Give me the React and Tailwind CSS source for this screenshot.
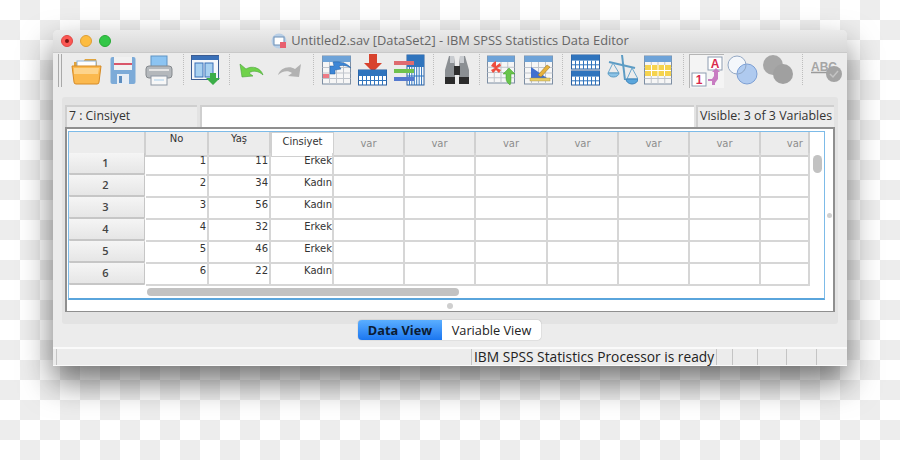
const rows = [
  [1, 11, "Erkek"],
  [2, 34, "Kadın"],
  [3, 56, "Kadın"],
  [4, 32, "Erkek"],
  [5, 46, "Erkek"],
  [6, 22, "Kadın"],
];

const varCols = [0, 1, 2, 3, 4, 5, 6];
const gridCols = "grid grid-cols-[77px_63px_62px_63px_71px_71px_72px_71px_71px_71px_49px]";

// small spreadsheet drawing used by most toolbar icons
function Sheet({ x = 0, y = 0, w = 29, h = 29, fill = "#f6f6f6" }) {
  const cols = [1, 2, 3].map((i) => x + (w * i) / 4);
  const lines = [1, 2, 3].map((i) => y + 6 + ((h - 6) * i) / 4);
  return (
    <g>
      <rect x={x} y={y} width={w} height={h} fill={fill} stroke="#7d8ea3" />
      <rect x={x} y={y} width={w} height="6" fill="#6ea3d8" />
      {cols.map((c) => (
        <line key={c} x1={c} x2={c} y1={y + 6} y2={y + h} stroke="#c0c5cc" />
      ))}
      {lines.map((l) => (
        <line key={l} x1={x} x2={x + w} y1={l} y2={l} stroke="#c0c5cc" />
      ))}
    </g>
  );
}

function BlueTable({ x = 0, y = 0, w = 29, h = 14 }) {
  const cols = [1, 2, 3, 4, 5, 6].map((i) => x + (w * i) / 7);
  return (
    <g>
      <rect x={x} y={y} width={w} height={h} fill="#fff" stroke="#2a5f9e" />
      <rect x={x} y={y} width={w} height={h * 0.4} fill="#2f74bd" />
      {cols.map((c) => (
        <line key={c} x1={c} x2={c} y1={y + h * 0.4} y2={y + h} stroke="#2f74bd" />
      ))}
      <line x1={x} x2={x + w} y1={y + h * 0.7} y2={y + h * 0.7} stroke="#2f74bd" />
    </g>
  );
}

function Icon({ w = 30, className = "", children }) {
  return (
    <svg width={w} height="32" viewBox={`0 0 ${w} 32`} className={`shrink-0 ${className}`}>
      {children}
    </svg>
  );
}

function Sep({ className = "" }) {
  return <div className={`h-[31px] w-0 border-l border-dotted border-[#bdbdbd] shrink-0 ${className}`} />;
}

function Toolbar() {
  return (
    <div className="h-[45px] pt-px flex items-start border-t border-[#c9c9c9] bg-[#ececec]">
      <div className="ml-[5px] h-[33px] w-[4px] border-x border-[#a9a9a9] shrink-0" />

      {/* open */}
      <Icon w={31} className="ml-[9px]">
        <path d="M3 8h9l2-3h11l1 4v3H3z" fill="#e0a43e" />
        <rect x="6" y="7" width="19" height="7" fill="#fff" stroke="#8fb4d8" />
        <path d="M1 12h29l-2 16a2 2 0 0 1-2 2H5a2 2 0 0 1-2-2z" fill="#fbb94e" stroke="#d68a24" />
        <path d="M3 14h25l-1 6H3z" fill="#fdd48c" />
      </Icon>
      {/* save */}
      <Icon w={26} className="ml-[8px]">
        <rect x="0.5" y="3" width="25" height="27" rx="2" fill="#7dabd8" />
        <rect x="4" y="3" width="18" height="13" fill="#f1f1f1" />
        <rect x="4" y="9" width="18" height="2" fill="#d9566a" />
        <rect x="7" y="20" width="12" height="10" fill="#e6edf5" />
        <rect x="9" y="22" width="3" height="7" fill="#5d8dbf" />
      </Icon>
      {/* print */}
      <Icon w={28} className="ml-[9px]">
        <rect x="6" y="2" width="16" height="12" fill="#8cc4f2" stroke="#5e93c4" />
        <rect x="1" y="12" width="26" height="12" rx="3" fill="#b4b8bc" stroke="#85898d" />
        <rect x="4" y="15" width="20" height="2" fill="#e4e4e4" />
        <rect x="6" y="22" width="16" height="9" fill="#f7f7f7" stroke="#8d98a5" />
        <line x1="9" x2="19" y1="26" y2="26" stroke="#a9d0ee" />
      </Icon>
      <Sep className="ml-[10px]" />
      {/* data window */}
      <Icon w={30} className="ml-[7px]">
        <rect x="0.5" y="1.5" width="27" height="24" fill="#f5f7fa" stroke="#3b5c92" />
        <rect x="1" y="2" width="27" height="4" fill="#3a70b8" />
        <rect x="4" y="9" width="8" height="14" fill="#a8d0f0" stroke="#3a70b8" />
        <rect x="14" y="9" width="8" height="14" fill="#a8d0f0" stroke="#3a70b8" />
        <path d="M19 19h6v5h4l-7 7-7-7h4z" fill="#3cae48" />
      </Icon>
      <Sep className="ml-[8px]" />
      {/* undo */}
      <Icon w={26} className="ml-[9px]">
        <path d="M1 10l2 13 11-1-4-3c4-3 10-2 14 2-2-7-11-10-17-6z" fill="#6fd24a" stroke="#4aa33b" strokeWidth="0.6" />
      </Icon>
      {/* redo */}
      <Icon w={26} className="ml-[11px]">
        <path d="M25 10l-2 13-11-1 4-3c-4-3-10-2-14 2 2-7 11-10 17-6z" fill="#b2b2b2" />
      </Icon>
      <Sep className="ml-[11px]" />
      {/* go to case */}
      <Icon w={30} className="ml-[8px]">
        <Sheet x={0.5} y={2} w={28} h={28} />
        <rect x="1" y="20" width="6" height="4" fill="#ee7a85" />
        <path d="M8 20v-8h4l-1-4c7-1 14 1 18 6-5-3-9-3-12-2l2 3-6 1v4z" fill="#3d86d6" stroke="#255f9f" strokeWidth="0.5" />
      </Icon>
      {/* insert cases */}
      <Icon w={30} className="ml-[6px]">
        <path d="M11 0h8v9h5l-9 9-9-9h5z" fill="#d8432e" />
        <BlueTable x={0.5} y={16} w={28} h={15} />
      </Icon>
      {/* insert variable */}
      <Icon w={32} className="ml-[5px]">
        <BlueTable x={14} y={1} w={17} h={30} />
        <rect x="1" y="7" width="20" height="4" fill="#df6b6f" />
        <rect x="1" y="15" width="20" height="4" fill="#6fc24f" />
        <rect x="1" y="23" width="20" height="4" fill="#5479cf" />
      </Icon>
      <Sep className="ml-[8px]" />
      {/* find */}
      <Icon w={26} className="ml-[10px]">
        <path d="M5 2h5l1 10v18H1V16z" fill="#8b8f93" />
        <path d="M21 2h-5l-1 10v18h10V16z" fill="#8b8f93" />
        <rect x="10" y="12" width="6" height="9" fill="#2d2d2d" />
        <rect x="1" y="23" width="10" height="7" fill="#2b2b2b" />
        <rect x="15" y="23" width="10" height="7" fill="#2b2b2b" />
        <rect x="6" y="2" width="4" height="7" fill="#c9ccd0" />
        <rect x="16" y="2" width="4" height="7" fill="#c9ccd0" />
      </Icon>
      <Sep className="ml-[9px]" />
      {/* split file */}
      <Icon w={30} className="ml-[7px]">
        <Sheet x={0.5} y={2} w={27} h={27} />
        <path d="M9 7v5l4-3 1 3-4 2 4 2-2 3-3-3-3 3-2-3 4-2-4-2 2-3z" fill="#ee4d3e" />
        <path d="M22 14l6 6h-4v4c0 3 0 5-1 7-2-2-4-3-4-7v-4h-3z" fill="#69c44a" stroke="#3f9c31" strokeWidth="0.5" />
      </Icon>
      {/* weight cases */}
      <Icon w={30} className="ml-[7px]">
        <Sheet x={0.5} y={2} w={28} h={28} />
        <path d="M7 13v11h16z" fill="#3f70cf" />
        <path d="M14 21l9-10 3 2-9 10z" fill="#e7b23b" stroke="#8c6a1c" strokeWidth="0.5" />
        <rect x="6" y="24" width="20" height="3" fill="#e7cd6a" stroke="#a38b37" strokeWidth="0.4" />
      </Icon>
      <Sep className="ml-[8px]" />
      {/* split tables */}
      <Icon w={30} className="ml-[8px]">
        <BlueTable x={0.5} y={1} w={28} h={14} />
        <BlueTable x={0.5} y={17} w={28} h={14} />
      </Icon>
      {/* scale */}
      <Icon w={31} className="ml-[6px]">
        <line x1="15" x2="18" y1="1" y2="26" stroke="#5d9cc4" strokeWidth="2" />
        <path d="M2 8l26 6" stroke="#5d9cc4" strokeWidth="2" />
        <path d="M6 9l-5 10h11z" fill="none" stroke="#6ba6cc" />
        <path d="M25 14l-5 11h11z" fill="none" stroke="#6ba6cc" />
        <path d="M1 19h11a5.500 4 0 0 1-11 0z" fill="#8cc3e6" stroke="#5d9cc4" />
        <path d="M19 25h12a6 5 0 0 1-12 0z" fill="#5aa6dc" stroke="#3c82b8" />
      </Icon>
      {/* value labels table */}
      <Icon w={29} className="ml-[6px]">
        <Sheet x={0.5} y={2} w={27} h={28} />
        <rect x="1" y="11" width="26" height="11" fill="#f5d34f" />
        <line x1="1" x2="27" y1="16.500" y2="16.500" stroke="#fff" />
        <line x1="7.500" x2="7.500" y1="11" y2="22" stroke="#fff" />
        <line x1="14" x2="14" y1="11" y2="22" stroke="#fff" />
        <line x1="20.500" x2="20.500" y1="11" y2="22" stroke="#fff" />
      </Icon>
      <Sep className="ml-[10px]" />
      {/* value labels toggle, pressed */}
      <div className="ml-[5px] h-[34px] w-[35px] border-l border-t border-[#b5b5b5] bg-[#f4f4f4] shrink-0">
        <svg width="34" height="33" viewBox="0 0 34 33">
          <rect x="18" y="2" width="14" height="13" fill="#fff" stroke="#8d9cb0" />
          <text x="25" y="13" textAnchor="middle" fontSize="12" fontWeight="700" fill="#d92a4e" fontFamily="Liberation Sans, sans-serif">A</text>
          <rect x="2" y="18" width="14" height="13" fill="#fff" stroke="#8d9cb0" />
          <text x="9" y="29" textAnchor="middle" fontSize="12" fontWeight="700" fill="#d92a4e" fontFamily="Liberation Sans, sans-serif">1</text>
          <path d="M18 24h4l2-3v-4h-2l4-4 4 4h-2v7l-3 4v2h-3v-4h-4z" fill="#c87cc2" />
        </svg>
      </div>
      {/* variable sets */}
      <Icon w={31} className="ml-[3px]">
        <circle cx="10" cy="11" r="9" fill="#f4f7fb" stroke="#93a8c4" />
        <circle cx="20" cy="20" r="10" fill="#a8c6f0" fillOpacity="0.9" stroke="#7c9fd4" />
        <path d="M11 20a9 9 0 0 0 8-9" fill="none" stroke="#93a8c4" />
      </Icon>
      {/* variable sets, disabled */}
      <Icon w={31} className="ml-[5px]">
        <circle cx="10" cy="11" r="10" fill="#a6a6a6" />
        <circle cx="20" cy="20" r="10" fill="#a0a0a0" />
      </Icon>
      <Sep className="ml-[8px]" />
      {/* spell check, disabled */}
      <Icon w={32} className="ml-[8px]">
        <text x="0" y="17" fontSize="12" fontWeight="700" fill="#a5a5a5" fontFamily="Liberation Sans, sans-serif">ABC</text>
        <line x1="0" x2="24" y1="18.500" y2="18.500" stroke="#9a9a9a" strokeWidth="1.500" />
        <circle cx="23" cy="20" r="8" fill="#a3a3a3" />
        <path d="M19 20l3 3 5-6" fill="none" stroke="#c4c4c4" strokeWidth="1.500" />
      </Icon>
    </div>
  );
}

function DataGrid() {
  return (
    <div className="flex-1 border-2 border-b border-[#8f8f8f] bg-white flex flex-col">
      <div className="mt-[2px] flex">
        <div className="ml-px h-[169px] w-[757px] shrink-0 border border-[#7dbbe8] border-b-2 border-b-[#5aa5dc] bg-white flex">
          <div className="w-[741px] shrink-0 flex flex-col">
            {/* header row */}
            <div className={`${gridCols} h-[21px] text-[10px] text-[#333]`}>
              <div className="bg-[#ececec] border-r-2 border-b-2 border-[#d0d0d0]" />
              <div className="bg-[#ececec] border-r-2 border-b-2 border-[#d0d0d0] text-center leading-[14px]">No</div>
              <div className="bg-[#ececec] border-r-2 border-b-2 border-[#d0d0d0] text-center leading-[14px]">Yaş</div>
              <div className="bg-white border border-[#d0d0d0] text-center leading-[17px]">Cinsiyet</div>
              {varCols.map((i) => (
                <div
                  key={i}
                  className={`bg-[#ececec] border-r-2 border-b-2 border-[#d0d0d0] leading-[23px] text-[#8d8d8d] ${i === 6 ? "text-right pr-[5px]" : "text-center"}`}
                >
                  var
                </div>
              ))}
            </div>
            {/* data rows */}
            {rows.map((r) => (
              <div key={r[0]} className={`${gridCols} h-[22px] text-[10px] text-[#333]`}>
                <div className="mb-px mr-px pr-[2px] rounded-[1px] border-b-2 border-r border-[#c6c6c6] bg-gradient-to-b from-[#f5f5f5] to-[#e6e6e6] text-center font-['Open_Sans',sans-serif] text-[11px] font-semibold leading-[20px] text-[#444]">
                  {r[0]}
                </div>
                <div className="border-r-2 border-b-2 border-[#d6d6d6] text-right pr-px leading-[16px]">{r[0]}</div>
                <div className="border-r-2 border-b-2 border-[#d6d6d6] text-right pr-px leading-[16px]">{r[1]}</div>
                <div className="border-r-2 border-b-2 border-[#d6d6d6] text-right leading-[16px]">{r[2]}</div>
                {varCols.map((i) => (
                  <div key={i} className="border-r-2 border-b-2 border-[#d6d6d6]" />
                ))}
              </div>
            ))}
            {/* horizontal scroller */}
            <div className="flex-1 pl-[78px] pt-[3px]">
              <div className="h-[8px] w-[312px] rounded-full bg-[#c2c2c2]" />
            </div>
          </div>
          {/* vertical scroller */}
          <div className="flex-1 pl-[3px] pt-[23px]">
            <div className="h-[18px] w-[9px] rounded-full bg-[#c2c2c2]" />
          </div>
        </div>
        <div className="flex-1 flex items-center justify-center">
          <div className="w-[5px] h-[5px] rounded-full bg-[#cfcfcf]" />
        </div>
      </div>
      {/* split handle */}
      <div className="flex-1 flex items-center justify-center">
        <div className="w-[6px] h-[6px] rounded-full bg-[#cfcfcf]" />
      </div>
    </div>
  );
}

export default function App() {
  return (
    <div className="w-[900px] h-[460px] overflow-hidden pt-[30px] pl-[53px] bg-[conic-gradient(#ededed_25%,#ffffff_25%_50%,#ededed_50%_75%,#ffffff_75%)] bg-[length:40px_40px] font-['DejaVu_Sans',sans-serif]">
      <div className="w-[794px] h-[336px] flex flex-col rounded-t-[5px] bg-[#ececec] shadow-[0_16px_32px_rgba(0,0,0,0.55)]">
        {/* title bar */}
        <div className="h-[22px] relative flex items-center justify-center rounded-t-[5px] bg-gradient-to-b from-[#ebebeb] to-[#d6d6d6]">
          <div className="absolute left-[8px] top-[5px] flex gap-[7px]">
            <div className="w-[12px] h-[12px] rounded-full bg-[#fc5753] border border-[#df4744] flex items-center justify-center">
              <div className="w-[4px] h-[4px] rounded-full bg-[#7a1512]" />
            </div>
            <div className="w-[12px] h-[12px] rounded-full bg-[#fdbc40] border border-[#de9f34]" />
            <div className="w-[12px] h-[12px] rounded-full bg-[#33c748] border border-[#27aa35]" />
          </div>
          <svg width="16" height="16" viewBox="0 0 16 16" className="mr-[4px]">
            <circle cx="8" cy="8" r="7.500" fill="#b9cfe6" />
            <rect x="3" y="4" width="10" height="8" fill="#fff" stroke="#6c8fb5" />
            <rect x="9" y="9" width="6" height="6" fill="#e8606f" />
          </svg>
          <span className="font-['Open_Sans',sans-serif] text-[12.850px] text-[#666]">Untitled2.sav [DataSet2] - IBM SPSS Statistics Data Editor</span>
        </div>

        <Toolbar />

        {/* editor panel */}
        <div className="mx-[9px] h-[227px] flex flex-col rounded-[3px] bg-[#e3e3e3] px-[3px] pt-[8px]">
          <div className="h-[22px] flex gap-[3px] font-['Open_Sans',sans-serif] text-[#333]">
            <div className="w-[132px] pl-[2px] bg-[#ececec] border-t-2 border-l-2 border-[#cfcfcf] text-[12.250px] leading-[18px]">7 : Cinsiyet</div>
            <div className="w-[494px] bg-white border-t-2 border-l-2 border-[#cfcfcf]" />
            <div className="w-[138px] pl-[2px] -ml-px bg-[#ececec] border-t-2 border-l-2 border-[#cfcfcf] text-[12.400px] leading-[18px] whitespace-nowrap">Visible: 3 of 3 Variables</div>
          </div>
          <div className="flex-1 flex flex-col pb-[12px]">
            <DataGrid />
          </div>
        </div>

        {/* view tabs */}
        <div className="flex-1 relative flex justify-center">
          <div className="absolute top-[-4px] left-[305px] flex h-[20px] w-[183px] rounded-[4px] overflow-hidden font-['Open_Sans',sans-serif] shadow-[0_0_1px_rgba(0,0,0,0.5)]">
            <div className="w-[84px] bg-gradient-to-b from-[#5aaeff] to-[#1a76f0] text-center text-[12.750px] font-bold leading-[20px] text-[#0c1c33]">Data View</div>
            <div className="flex-1 bg-white text-center text-[12.750px] leading-[20px] text-[#222]">Variable View</div>
          </div>
        </div>

        {/* status bar */}
        <div className="h-[19px] flex pl-[3px] border-t-2 border-b border-[#fafafa] bg-[#ececec] font-['Open_Sans',sans-serif] text-[13.750px] text-[#222]">
          <div className="w-[416px] border-x border-[#c4c4c4]" />
          <div className="w-[245px] pl-[2px] border-r border-[#c4c4c4] leading-[16px] whitespace-nowrap">IBM SPSS Statistics Processor is ready</div>
          <div className="w-[16px] border-r border-[#c4c4c4]" />
          <div className="w-[25px] border-r border-[#c4c4c4]" />
          <div className="w-[29px] border-r border-[#c4c4c4]" />
          <div className="w-[30px] border-r border-[#c4c4c4]" />
          <div className="flex-1" />
        </div>
      </div>
    </div>
  );
}
